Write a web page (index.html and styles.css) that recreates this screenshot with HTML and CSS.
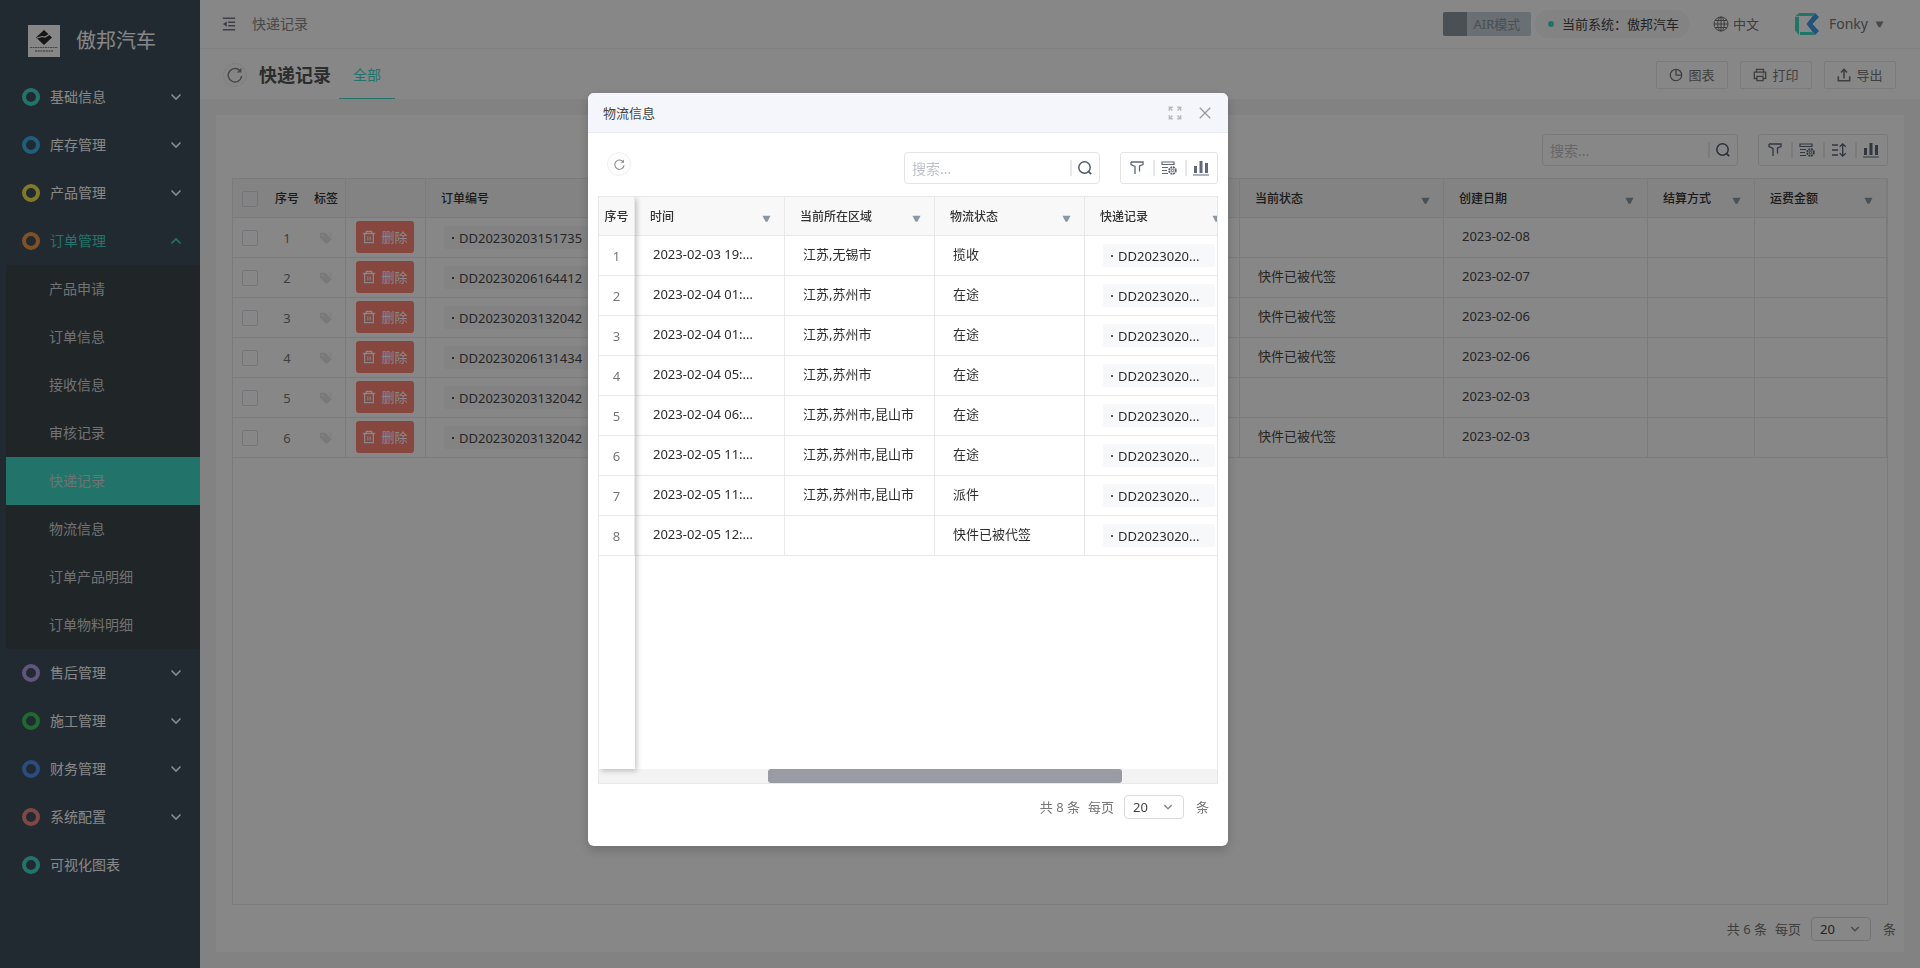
FILE: index.html
```html
<!DOCTYPE html>
<html lang="zh-CN">
<head>
<meta charset="utf-8">
<title>快递记录</title>
<link rel="stylesheet" href="styles.css">
</head>
<body>
<svg class="sprite" aria-hidden="true">
  <symbol id="i-down" viewBox="0 0 12 12"><path d="M1.5 3.5 6 8l4.500-4.500" fill="none" stroke="currentColor" stroke-width="1.700"/></symbol>
  <symbol id="i-up" viewBox="0 0 12 12"><path d="M1.500 8.500 6 4l4.500 4.500" fill="none" stroke="currentColor" stroke-width="1.700"/></symbol>
  <symbol id="i-tri" viewBox="0 0 10 8"><path d="M.5.5h9L6 7H4z" fill="currentColor"/></symbol>
  <symbol id="i-refresh" viewBox="0 0 16 16"><path d="M13.600 4.700A6.700 6.700 0 1 0 14.600 9" fill="none" stroke="currentColor" stroke-width="1.500"/><path d="M14.400.8v4.700H9.700z" fill="currentColor"/></symbol>
  <symbol id="i-search" viewBox="0 0 16 16"><circle cx="7.500" cy="7.500" r="5.700" fill="none" stroke="currentColor" stroke-width="1.500"/><path d="m11.600 11.600 2.600 2.600" stroke="currentColor" stroke-width="1.800"/></symbol>
  <symbol id="i-filter" viewBox="0 0 16 16"><path d="M2 2h12v2.500L10.500 6v5.500M6 14V6.500L2 4.500V2" fill="none" stroke="currentColor" stroke-width="1.300"/></symbol>
  <symbol id="i-fields" viewBox="0 0 16 16"><path d="M1 2h12v2.500H1zM1 7.500h6M1 10.500h5M1 13.500h6" fill="none" stroke="currentColor" stroke-width="1.200"/><circle cx="11.500" cy="10.500" r="3.300" fill="none" stroke="currentColor" stroke-width="1.900" stroke-dasharray="1.900 .7"/><circle cx="11.500" cy="10.500" r="1.200" fill="none" stroke="currentColor"/></symbol>
  <symbol id="i-height" viewBox="0 0 16 16"><path d="M1 3h6M1 8h6M1 13h6M11.700 2v12M8.700 4.800l3-3 3 3M8.700 11.200l3 3 3-3" fill="none" stroke="currentColor" stroke-width="1.300"/></symbol>
  <symbol id="i-bars" viewBox="0 0 16 16"><path d="M1 6h3v7H1zM6.500 1h3v12h-3zM12 3h3v10h-3zM0 14.500h16v1H0z" fill="currentColor"/></symbol>
  <symbol id="i-trash" viewBox="0 0 16 16"><path d="M1 4h14M5 4V1.500h6V4M3 4v10.500h10V4" fill="none" stroke="currentColor" stroke-width="1.500"/><path d="M6.700 7v5M9.400 7v5" stroke="currentColor" stroke-width="1.200"/></symbol>
  <symbol id="i-tag" viewBox="0 0 16 16"><path d="M1 3q0-1 1-1h4.500q.7 0 1.200.5l6 6q.8.800 0 1.600l-4.300 4.300q-.8.800-1.600 0l-6-6Q1 7.800 1 7z" fill="currentColor"/><path d="M9 1h6v8z" fill="currentColor" opacity=".3"/><circle cx="4" cy="5" r="1" fill="#fff"/></symbol>
  <symbol id="i-fold" viewBox="0 0 16 16"><path d="M1 1.500h14M7 6h8M7 10h8M1 14.500h14" fill="none" stroke="currentColor" stroke-width="1.700"/><path d="M5.500 5v6L1 8z" fill="currentColor"/></symbol>
  <symbol id="i-globe" viewBox="0 0 16 16"><g fill="none" stroke="currentColor"><circle cx="8" cy="8" r="7"/><ellipse cx="8" cy="8" rx="3.300" ry="7"/><path d="M8 1v14M1 8h14M2 4.500h12M2 11.500h12"/></g></symbol>
  <symbol id="i-pie" viewBox="0 0 16 16"><path d="M8 1.500v6.700h6.500M8 1.500a6.500 6.500 0 1 0 6.500 6.700A6.500 6.500 0 0 0 8 1.500z" fill="none" stroke="currentColor" stroke-width="1.400"/></symbol>
  <symbol id="i-print" viewBox="0 0 16 16"><path d="M4 4.500V1.500h8v3M4 12H1.500V4.700h13V12H12M4.500 9.500h7v5h-7z" fill="none" stroke="currentColor" stroke-width="1.500"/><path d="M11 7h2" stroke="currentColor"/></symbol>
  <symbol id="i-export" viewBox="0 0 16 16"><path d="M1.500 9.500v5h13v-5M8 12V2M4.500 5.200 8 1.700l3.500 3.500" fill="none" stroke="currentColor" stroke-width="1.800"/></symbol>
  <symbol id="i-expand" viewBox="0 0 16 16"><path d="M1.500 5.500v-4h4M10.500 1.500h4v4M14.500 10.500v4h-4M5.500 14.500h-4v-4M1.500 1.500 5 5M14.500 1.500 11 5M14.500 14.500 11 11M1.500 14.500 5 11" fill="none" stroke="currentColor" stroke-width="1.700"/></symbol>
  <symbol id="i-close" viewBox="0 0 16 16"><path d="m2 2 12 12M14 2 2 14" fill="none" stroke="currentColor" stroke-width="1.500"/></symbol>
</svg>

<div class="app">
  <aside class="sidebar">
    <div class="brand">
      <svg class="brand-logo" viewBox="0 0 32 32"><path d="M0 0h32v32H0z" fill="#fff"/><path d="m16 5 8 7.500-8 7.500-8-7.500z" fill="#2b2b2b"/><path d="m9 13 5-1.500 3 .5 5-3" stroke="#fff" stroke-width="1.200" fill="none"/><path d="M2 22.500h28" stroke="#888" stroke-dasharray="2 .5"/><path d="M7 26h18" stroke="#aaa" stroke-width="2" stroke-dasharray="2 .7"/></svg>
      <span>傲邦汽车</span>
    </div>
    <nav>
      <a class="item" href="#"><i class="ring teal"></i><span>基础信息</span><svg><use href="#i-down"/></svg></a>
      <a class="item" href="#"><i class="ring blue"></i><span>库存管理</span><svg><use href="#i-down"/></svg></a>
      <a class="item" href="#"><i class="ring yellow"></i><span>产品管理</span><svg><use href="#i-down"/></svg></a>
      <a class="item open" href="#"><i class="ring orange"></i><span>订单管理</span><svg><use href="#i-up"/></svg></a>
      <div class="submenu">
        <a href="#">产品申请</a>
        <a href="#">订单信息</a>
        <a href="#">接收信息</a>
        <a href="#">审核记录</a>
        <a class="active" href="#">快递记录</a>
        <a href="#">物流信息</a>
        <a href="#">订单产品明细</a>
        <a href="#">订单物料明细</a>
      </div>
      <a class="item" href="#"><i class="ring purple"></i><span>售后管理</span><svg><use href="#i-down"/></svg></a>
      <a class="item" href="#"><i class="ring green"></i><span>施工管理</span><svg><use href="#i-down"/></svg></a>
      <a class="item" href="#"><i class="ring royal"></i><span>财务管理</span><svg><use href="#i-down"/></svg></a>
      <a class="item" href="#"><i class="ring red"></i><span>系统配置</span><svg><use href="#i-down"/></svg></a>
      <a class="item" href="#"><i class="ring teal"></i><span>可视化图表</span></a>
    </nav>
  </aside>

  <div class="page">
    <header class="topbar">
      <button class="icon-btn fold" aria-label="收起菜单"><svg><use href="#i-fold"/></svg></button>
      <span class="crumb">快递记录</span>
      <button class="air" role="switch" aria-checked="false"><i></i><span>AIR模式</span></button>
      <div class="system"><i></i>当前系统：傲邦汽车</div>
      <button class="lang"><svg><use href="#i-globe"/></svg>中文</button>
      <button class="user">
        <svg class="avatar" viewBox="0 0 24 24"><path d="M0 5V18.500L4 23V5z" fill="#41dbc5"/><path d="M0 4.500 4 1h16l-3 3H4.500z" fill="#41dbc5"/><path d="M5 20h12l3 3H5z" fill="#41dbc5"/><path d="m20 1 4 4-6.500 7 6.500 7-4 4-8.500-11z" fill="#3f9fe8"/></svg>
        Fonky<svg class="tri"><use href="#i-tri"/></svg>
      </button>
    </header>

    <div class="titlebar">
      <button class="round" aria-label="刷新"><svg><use href="#i-refresh"/></svg></button>
      <h1>快递记录</h1>
      <a class="tab" href="#">全部</a>
      <div class="actions">
        <button><svg><use href="#i-pie"/></svg>图表</button>
        <button><svg><use href="#i-print"/></svg>打印</button>
        <button><svg><use href="#i-export"/></svg>导出</button>
      </div>
    </div>

    <main class="content">
      <section class="card">
        <div class="tools">
          <div class="search"><input type="text" placeholder="搜索..." aria-label="搜索"><button aria-label="搜索"><svg><use href="#i-search"/></svg></button></div>
          <div class="toolset">
            <button aria-label="筛选"><svg><use href="#i-filter"/></svg></button>
            <button aria-label="字段"><svg><use href="#i-fields"/></svg></button>
            <button aria-label="行高"><svg><use href="#i-height"/></svg></button>
            <button aria-label="图表"><svg><use href="#i-bars"/></svg></button>
          </div>
        </div>
        <div class="grid">
          <table class="main-table">
            <colgroup><col class="c-check"><col class="c-no"><col class="c-tag"><col class="c-op"><col><col class="c-wide"><col class="c-wide"><col class="c-pay"><col class="c-fee"></colgroup>
            <thead>
              <tr><th class="mid bare"><input type="checkbox" aria-label="全选"></th><th class="mid bare">序号</th><th class="mid">标签</th><th></th><th>订单编号</th><th>当前状态<svg><use href="#i-tri"/></svg></th><th>创建日期<svg><use href="#i-tri"/></svg></th><th>结算方式<svg><use href="#i-tri"/></svg></th><th>运费金额<svg><use href="#i-tri"/></svg></th></tr>
            </thead>
            <tbody>
              <tr><td class="mid bare"><input type="checkbox" aria-label="选择 1"></td><td class="mid bare no">1</td><td class="mid"><svg class="tag"><use href="#i-tag"/></svg></td><td class="op"><button class="del"><svg><use href="#i-trash"/></svg>删除</button></td><td><a class="pill" href="#">DD20230203151735</a></td><td></td><td>2023-02-08</td><td></td><td></td></tr>
              <tr><td class="mid bare"><input type="checkbox" aria-label="选择 2"></td><td class="mid bare no">2</td><td class="mid"><svg class="tag"><use href="#i-tag"/></svg></td><td class="op"><button class="del"><svg><use href="#i-trash"/></svg>删除</button></td><td><a class="pill" href="#">DD20230206164412</a></td><td>快件已被代签</td><td>2023-02-07</td><td></td><td></td></tr>
              <tr><td class="mid bare"><input type="checkbox" aria-label="选择 3"></td><td class="mid bare no">3</td><td class="mid"><svg class="tag"><use href="#i-tag"/></svg></td><td class="op"><button class="del"><svg><use href="#i-trash"/></svg>删除</button></td><td><a class="pill" href="#">DD20230203132042</a></td><td>快件已被代签</td><td>2023-02-06</td><td></td><td></td></tr>
              <tr><td class="mid bare"><input type="checkbox" aria-label="选择 4"></td><td class="mid bare no">4</td><td class="mid"><svg class="tag"><use href="#i-tag"/></svg></td><td class="op"><button class="del"><svg><use href="#i-trash"/></svg>删除</button></td><td><a class="pill" href="#">DD20230206131434</a></td><td>快件已被代签</td><td>2023-02-06</td><td></td><td></td></tr>
              <tr><td class="mid bare"><input type="checkbox" aria-label="选择 5"></td><td class="mid bare no">5</td><td class="mid"><svg class="tag"><use href="#i-tag"/></svg></td><td class="op"><button class="del"><svg><use href="#i-trash"/></svg>删除</button></td><td><a class="pill" href="#">DD20230203132042</a></td><td></td><td>2023-02-03</td><td></td><td></td></tr>
              <tr><td class="mid bare"><input type="checkbox" aria-label="选择 6"></td><td class="mid bare no">6</td><td class="mid"><svg class="tag"><use href="#i-tag"/></svg></td><td class="op"><button class="del"><svg><use href="#i-trash"/></svg>删除</button></td><td><a class="pill" href="#">DD20230203132042</a></td><td>快件已被代签</td><td>2023-02-03</td><td></td><td></td></tr>
            </tbody>
          </table>
        </div>
        <div class="pager">
          <span>共 6 条</span>
          <label for="size-main">每页</label>
          <span class="select"><select id="size-main"><option>20</option></select><svg><use href="#i-down"/></svg></span>
          <span>条</span>
        </div>
      </section>
    </main>
  </div>
</div>

<div class="mask">
  <div class="modal" role="dialog" aria-modal="true" aria-labelledby="modal-title">
    <div class="modal-head">
      <h2 id="modal-title">物流信息</h2>
      <button class="icon-btn expand" aria-label="全屏"><svg><use href="#i-expand"/></svg></button>
      <button class="icon-btn" aria-label="关闭"><svg><use href="#i-close"/></svg></button>
    </div>
    <div class="modal-body">
      <div class="tools">
        <button class="round small" aria-label="刷新"><svg><use href="#i-refresh"/></svg></button>
        <div class="search"><input type="text" placeholder="搜索..." aria-label="搜索"><button aria-label="搜索"><svg><use href="#i-search"/></svg></button></div>
        <div class="toolset">
          <button aria-label="筛选"><svg><use href="#i-filter"/></svg></button>
          <button aria-label="字段"><svg><use href="#i-fields"/></svg></button>
          <button aria-label="图表"><svg><use href="#i-bars"/></svg></button>
        </div>
      </div>
      <div class="grid">
        <div class="pane">
          <table class="track-table">
            <colgroup><col class="c-fixed"><col class="c-data"><col class="c-data"><col class="c-data"><col class="c-data"></colgroup>
            <thead>
              <tr><th class="mid">序号</th><th>时间<svg><use href="#i-tri"/></svg></th><th>当前所在区域<svg><use href="#i-tri"/></svg></th><th>物流状态<svg><use href="#i-tri"/></svg></th><th>快递记录<svg><use href="#i-tri"/></svg></th></tr>
            </thead>
            <tbody>
              <tr><td class="mid no">1</td><td>2023-02-03 19:...</td><td>江苏,无锡市</td><td>揽收</td><td><a class="pill" href="#">DD2023020...</a></td></tr>
              <tr><td class="mid no">2</td><td>2023-02-04 01:...</td><td>江苏,苏州市</td><td>在途</td><td><a class="pill" href="#">DD2023020...</a></td></tr>
              <tr><td class="mid no">3</td><td>2023-02-04 01:...</td><td>江苏,苏州市</td><td>在途</td><td><a class="pill" href="#">DD2023020...</a></td></tr>
              <tr><td class="mid no">4</td><td>2023-02-04 05:...</td><td>江苏,苏州市</td><td>在途</td><td><a class="pill" href="#">DD2023020...</a></td></tr>
              <tr><td class="mid no">5</td><td>2023-02-04 06:...</td><td>江苏,苏州市,昆山市</td><td>在途</td><td><a class="pill" href="#">DD2023020...</a></td></tr>
              <tr><td class="mid no">6</td><td>2023-02-05 11:...</td><td>江苏,苏州市,昆山市</td><td>在途</td><td><a class="pill" href="#">DD2023020...</a></td></tr>
              <tr><td class="mid no">7</td><td>2023-02-05 11:...</td><td>江苏,苏州市,昆山市</td><td>派件</td><td><a class="pill" href="#">DD2023020...</a></td></tr>
              <tr><td class="mid no">8</td><td>2023-02-05 12:...</td><td></td><td>快件已被代签</td><td><a class="pill" href="#">DD2023020...</a></td></tr>
            </tbody>
          </table>
        </div>
        <div class="scrollbar"><i></i></div>
      </div>
      <div class="pager">
        <span>共 8 条</span>
        <label for="size-modal">每页</label>
        <span class="select"><select id="size-modal"><option>20</option></select><svg><use href="#i-down"/></svg></span>
        <span>条</span>
      </div>
    </div>
  </div>
</div>
</body>
</html>
```

FILE: styles.css
```css
* { box-sizing: border-box; }
body {
  margin: 0;
  font: 13px/20px "Noto Sans", "Noto Sans CJK SC", sans-serif;
  color: #484848;
}
a { color: inherit; text-decoration: none; }
button, input, select { font: inherit; color: inherit; }
button { display: flex; align-items: center; justify-content: center; padding: 0; border: 0; background: none; }
svg { display: block; width: 14px; height: 14px; flex: none; }
.sprite { position: absolute; width: 0; height: 0; }
.app { display: flex; height: 100vh; }

/* Sidebar */
.sidebar { flex: none; width: 200px; background: #40505d; color: #fff; font-size: 14px; }
.brand { display: flex; align-items: center; gap: 16px; height: 73px; padding: 8px 28px 0; font-size: 20px; white-space: nowrap; }
.brand-logo { width: 32px; height: 32px; }
.item { display: flex; align-items: center; height: 48px; padding: 0 18px 0 22px; }
.item span { flex: 1; }
.item svg { width: 12px; height: 12px; }
.item.open { color: #41dbc8; }
.ring { width: 18px; height: 18px; margin-right: 10px; border: 4px solid; border-radius: 50%; }
.teal { color: #41dbc8; }
.blue { color: #3cb4e8; }
.yellow { color: #f2e64c; }
.orange { color: #f0994a; }
.purple { color: #b79ff0; }
.green { color: #3cc85a; }
.royal { color: #5090f0; }
.red { color: #f08884; }
.submenu { margin-left: 6px; background: #3e464b; color: #d4d8da; }
.submenu a { display: flex; align-items: center; height: 48px; padding-left: 43px; }
.submenu .active { background: #41dbc8; }

/* Header */
.page { flex: 1; min-width: 0; display: flex; flex-direction: column; background: #fff; }
.topbar { display: flex; align-items: center; height: 49px; padding: 0 36px 0 22px; border-bottom: 1px solid #f5f5f5; color: #777; }
.fold { margin-right: 16px; color: #778; }
.crumb { margin-right: auto; font-size: 14px; color: #888; }
.air { height: 24px; margin-right: 4px; overflow: hidden; border-radius: 2px; background: #c6d1d9; color: #8c979f; }
.air i { width: 24px; height: 24px; background: #8c979f; }
.air span { width: 64px; padding-right: 4px; }
.system { display: flex; align-items: center; height: 28px; margin-right: 24px; padding: 0 10px 0 13px; border-radius: 14px; background: #f7f7f7; color: #444; }
.system i { width: 6px; height: 6px; margin-right: 8px; border-radius: 50%; background: #41dbc8; }
.lang { gap: 4px; margin-right: 36px; }
.lang svg { width: 16px; height: 16px; }
.user { gap: 10px; font-size: 14px; }
.user .avatar { width: 24px; height: 24px; }
.user .tri { width: 9px; height: 7px; margin-left: -3px; color: #8a8a92; }
.titlebar { display: flex; align-items: center; height: 50px; padding: 2px 24px 0 23px; }
.round { width: 24px; height: 24px; border: 1px solid #f0f0f0; border-radius: 50%; background: #fdfdfd; color: #888; }
.round svg { width: 16px; height: 16px; }
.small svg { width: 11px; height: 11px; }
h1 { margin: 0 8px 0 12px; font-size: 18px; line-height: 24px; color: #555; }
.tab { height: 48px; padding: 0 14px; border-bottom: 1px solid #41dbc8; color: #41dbc8; font-size: 14px; line-height: 48px; }
.actions { display: flex; gap: 12px; margin-left: auto; }
.actions button { gap: 5px; width: 72px; height: 28px; border: 1px solid #e8e8e8; border-radius: 2px; color: #777; }

/* Content */
.content { flex: 1; min-height: 0; padding: 16px; background: #f5f5f5; }
.card { display: flex; flex-direction: column; height: 100%; padding: 0 16px; background: #fff; }
.tools { display: flex; align-items: center; justify-content: flex-end; gap: 20px; padding: 19px 0 12px; }
.search { display: flex; width: 196px; height: 32px; border: 1px solid #e4e4e6; border-radius: 4px; }
.search input { flex: 1; min-width: 0; padding: 2px 7px 0; border: 0; background: none; outline: 0; font-size: 14px; }
.search input::placeholder { color: #bfc2c8; opacity: 1; }
.search button { position: relative; width: 29px; color: #515a6e; }
.search button::before, .toolset button + button::before { content: ""; position: absolute; left: 0; width: 2px; height: 16px; background: #e8e8ea; }
.search svg, .toolset svg { width: 16px; height: 16px; }
.toolset { display: flex; height: 32px; border: 1px solid #e4e4e6; border-radius: 3px; }
.toolset button { position: relative; width: 32px; color: #5f677a; }
.grid { flex: 1; min-height: 0; border: 1px solid #e8e8e8; }
table { width: 100%; table-layout: fixed; border-spacing: 0; }
.c-check { width: 34px; }
.c-no { width: 40px; }
.c-tag { width: 39px; }
.c-op { width: 80px; }
.c-wide { width: 204px; }
.c-pay { width: 107px; }
.c-fee { width: 132px; }
.c-fixed { width: 36px; }
.c-data { width: 150px; }
th, td { border: solid #e8e8e8; border-width: 0 1px 1px 0; white-space: nowrap; text-align: left; }
th { height: 39px; padding: 2px 13px 0 15px; background: #f8f8f8; font-size: 12px; font-weight: 500; color: #333; }
th svg { float: right; width: 9px; height: 8px; margin-top: 8px; color: #8a98a6; }
td { height: 40px; padding: 0 3px 3px 18px; }
.bare { border-right: 0; }
th.mid { padding: 2px 0 0; text-align: center; }
td.mid { padding: 0; text-align: center; }
.no { color: #777; }
td.op { padding: 0 10px 2px; }
input[type="checkbox"] { display: block; appearance: none; width: 16px; height: 16px; margin: 0 auto; border: 1px solid #dcdee2; border-radius: 2px; }
.tag { margin: auto; color: #e4e4e4; }
.del { gap: 5px; width: 58px; height: 32px; border-radius: 3px; background: #ff8475; color: #fff; }
.pill { display: block; width: max-content; height: 23px; margin-top: 3px; padding: 0 20px 0 8px; border-radius: 3px; background: #f7f8fa; line-height: 25px; }
.pill::before { content: ""; display: inline-block; width: 2px; height: 2px; margin-right: 5px; background: #555; vertical-align: 4px; }
.track-table .pill { width: 112px; }
.pager { display: flex; align-items: center; justify-content: flex-end; gap: 8px; height: 47px; color: #777; }
.card .pager { margin-right: -8px; }
.select { position: relative; margin: 0 4px 0 2px; }
.select select { display: block; appearance: none; width: 60px; height: 24px; padding: 0 8px; border: 1px solid #d8dade; border-radius: 4px; background: none; color: #444; }
.select svg { position: absolute; right: 11px; top: 7px; width: 10px; height: 10px; color: #888c96; pointer-events: none; }

/* Dialog: centred in the window, less the gutter on its right */
.mask { position: fixed; inset: 0; display: flex; justify-content: center; align-items: flex-start; padding: 93px 104px 0 0; background: rgba(0, 0, 0, .47); }
.modal { width: 640px; overflow: hidden; border-radius: 6px; background: #fff; color: #2c2c2c; box-shadow: 0 4px 12px rgba(0, 0, 0, .2); }
.modal-head { display: flex; align-items: center; gap: 16px; height: 40px; padding: 0 16px 0 15px; border-bottom: 1px solid #e8eaf0; background: #f5f6fb; }
h2 { flex: 1; margin: 0; font-size: 13px; font-weight: 400; color: #444; }
.modal .icon-btn { color: #999; }
.modal .expand { color: #bbb; }
.modal-body { padding: 0 10px 16px; }
.modal .round { margin: -8px auto 0 9px; }
.modal .grid { position: relative; display: flex; flex-direction: column; height: calc(100vh - 380px); }
.modal .grid::after { content: ""; position: absolute; left: 0; top: 0; bottom: 14px; width: 36px; box-shadow: 2px 2px 5px rgba(0, 0, 0, .22); clip-path: inset(0 -10px -10px 0); pointer-events: none; }
.pane { flex: 1; overflow: hidden; }
.pane .track-table { width: 636px; }
.scrollbar { height: 14px; background: #f3f3f3; }
.scrollbar i { display: block; width: 57.2%; height: 14px; margin-left: 27.4%; border-radius: 3px; background: #999ca5; }
.modal .pager { height: 46px; padding-right: 9px; }
```
